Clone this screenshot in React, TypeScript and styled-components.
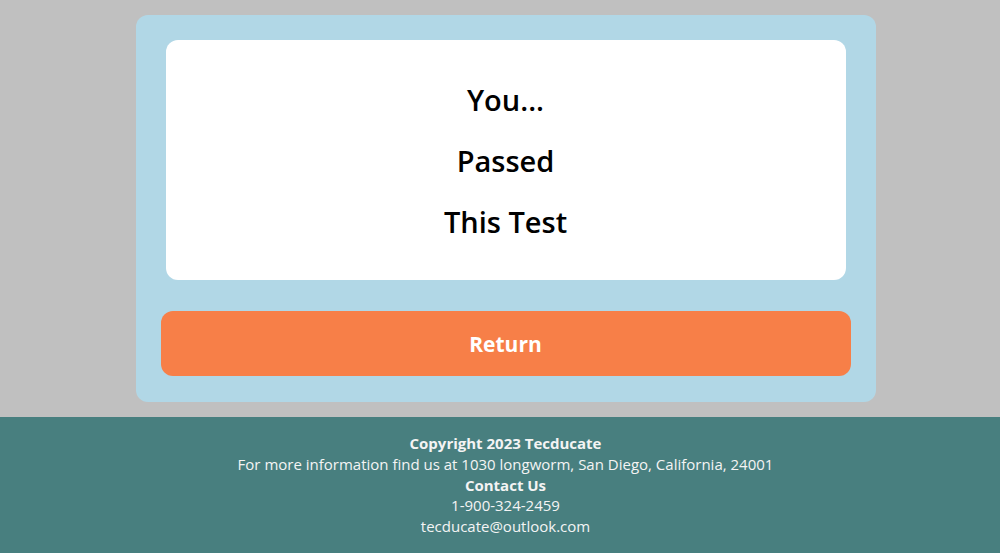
import React from "react";
import styled, { createGlobalStyle } from "styled-components";

const Global = createGlobalStyle`
  html, body { margin: 0; padding: 0; background: #c0c0c0; }
  body { font-family: "Open Sans", "DejaVu Sans", sans-serif; }
`;

const Page = styled.div`
  display: flex;
  flex-direction: column;
  min-height: 553px;
`;

const Main = styled.main`
  display: flex;
  justify-content: center;
  padding: 15px 0 15px 11px;
`;

const Card = styled.section`
  width: 740px;
  box-sizing: border-box;
  background: #b1d7e6;
  border-radius: 12px;
  padding: 25px 25px 26px 25px;
  display: flex;
  flex-direction: column;
  gap: 31px;
`;

const ResultBox = styled.div`
  margin: 0 5px;
  height: 240px;
  background: #ffffff;
  border-radius: 12px;
  display: flex;
  flex-direction: column;
  align-items: center;
  justify-content: center;
  gap: 22px;
`;

const ResultLine = styled.h2`
  margin: 0;
  font-size: 29px;
  line-height: 39px;
  font-weight: 600;
  color: #000;
`;

const ReturnButton = styled.button`
  height: 65px;
  border: none;
  border-radius: 12px;
  background: #f77f48;
  color: #fff;
  font-family: inherit;
  font-size: 21px;
  font-weight: 700;
  cursor: pointer;
`;

const Footer = styled.footer`
  flex: 1;
  background: #487f7f;
  color: #f4f4f4;
  padding: 16px 0 16px 11px;
  display: flex;
  flex-direction: column;
  align-items: center;
  font-size: 15px;
`;

const FooterLine = styled.div<{ $bold?: boolean }>`
  line-height: 20.8px;
  font-weight: ${(p) => (p.$bold ? 700 : 500)};
`;

export default function App() {
  return (
    <Page>
      <Global />
      <Main>
        <Card>
          <ResultBox>
            <ResultLine>You...</ResultLine>
            <ResultLine>Passed</ResultLine>
            <ResultLine>This Test</ResultLine>
          </ResultBox>
          <ReturnButton>Return</ReturnButton>
        </Card>
      </Main>
      <Footer>
        <FooterLine $bold>Copyright 2023 Tecducate</FooterLine>
        <FooterLine>For more information find us at 1030 longworm, San Diego, California, 24001</FooterLine>
        <FooterLine $bold>Contact Us</FooterLine>
        <FooterLine>1-900-324-2459</FooterLine>
        <FooterLine>tecducate@outlook.com</FooterLine>
      </Footer>
    </Page>
  );
}
